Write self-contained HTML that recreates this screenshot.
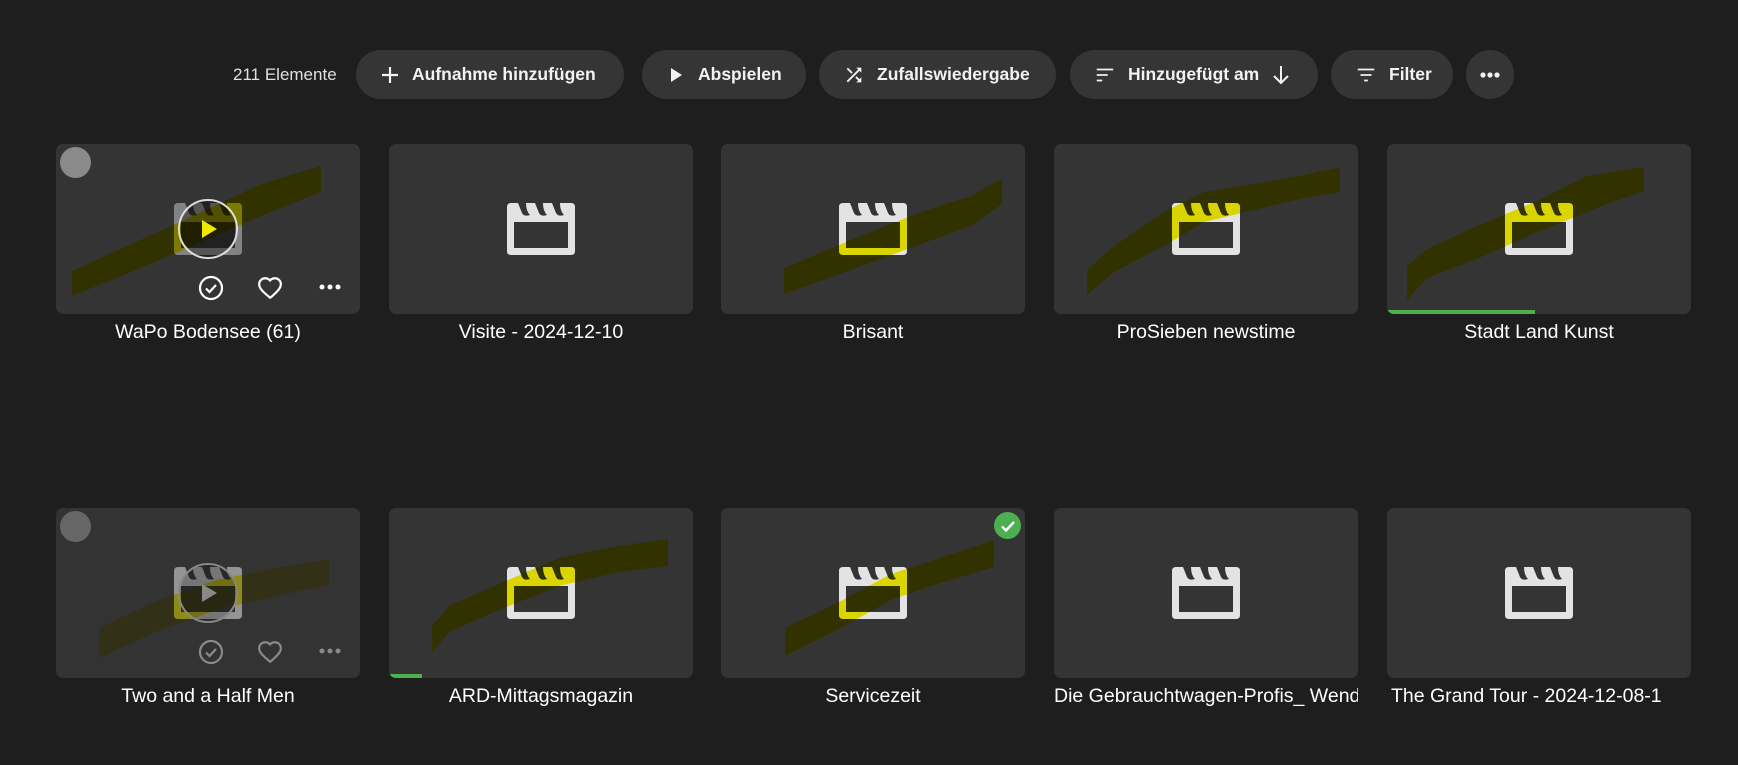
<!DOCTYPE html>
<html><head><meta charset="utf-8"><style>
*{box-sizing:border-box;margin:0;padding:0}
body{width:1738px;height:765px;background:#1e1e1e;font-family:"Liberation Sans",sans-serif;color:#fff;overflow:hidden;position:relative}
.count{position:absolute;left:233px;top:65px;font-size:17px;color:#e0e0e0}
.btn{position:absolute;top:50px;height:49px;border-radius:25px;background:#353535;display:flex;align-items:center;font-weight:bold;font-size:17.5px;color:#f2f2f2;padding-left:24px;gap:12px}
.btn svg{flex:none}
.card{position:absolute;width:304px;height:170px;background:#343434;border-radius:7px;overflow:hidden}
.card svg.ic{position:absolute;left:118px;top:59px}
.card svg.sc{position:absolute;left:0;top:0;mix-blend-mode:multiply}
.title{position:absolute;width:304px;text-align:center;font-size:19.5px;white-space:nowrap;overflow:hidden;color:#fff}
.prog{position:absolute;left:0;bottom:0;height:4px;background:#4caf50}
</style></head><body>
<svg width="0" height="0" style="position:absolute"><defs>
<g id="clap"><path fill-rule="evenodd" d="M4 0H64Q68 0 68 4V48Q68 52 64 52H4Q0 52 0 48V4Q0 0 4 0ZM7 19V45H61V19Z"/><path fill="#343434" d="M11 0 L19 0 Q19 8 23 12 Q17 14 15 10 Z M28 0 L36 0 Q36 8 40 12 Q34 14 32 10 Z M45 0 L53 0 Q53 8 57 12 Q51 14 49 10 Z"/></g>
</defs></svg>

<div class="count">211 Elemente</div>
<div class="btn" style="left:356px;width:268px"><svg width="20" height="20" viewBox="0 0 20 20"><path d="M10 2V18M2 10H18" stroke="#f2f2f2" stroke-width="2.2"/></svg>Aufnahme hinzufügen</div>
<div class="btn" style="left:642px;width:164px"><svg width="20" height="20" viewBox="0 0 20 20"><path d="M5 3L16 10L5 17Z" fill="#f2f2f2"/></svg>Abspielen</div>
<div class="btn" style="left:819px;width:237px"><svg width="22" height="22" viewBox="0 0 24 24"><path fill="#f2f2f2" d="M10.59 9.17L5.41 4 4 5.41l5.17 5.17 1.42-1.41zM14.5 4l2.04 2.04L4 18.59 5.41 20 17.960 7.46 20 9.5V4h-5.5zm.33 9.41l-1.41 1.41 3.13 3.13L14.5 20H20v-5.5l-2.04 2.04-3.13-3.13z"/></svg>Zufallswiedergabe</div>
<div class="btn" style="left:1070px;width:248px"><svg width="22" height="22" viewBox="0 0 24 24"><path d="M3 6H21M3 12H15M3 18H9" stroke="#f2f2f2" stroke-width="2"/></svg>Hinzugefügt am<svg width="20" height="22" viewBox="0 0 20 22"><path d="M10 2V19M3 12L10 19L17 12" stroke="#f2f2f2" stroke-width="2" fill="none"/></svg></div>
<div class="btn" style="left:1331px;width:122px"><svg width="22" height="22" viewBox="0 0 24 24"><path d="M3 6H21M6 12H18M10 18H14" stroke="#f2f2f2" stroke-width="2"/></svg>Filter</div>
<div class="btn" style="left:1466px;width:48px;padding-left:13px"><svg width="22" height="8" viewBox="0 0 22 8"><circle cx="4" cy="4" r="2.6" fill="#f2f2f2"/><circle cx="11" cy="4" r="2.6" fill="#f2f2f2"/><circle cx="18" cy="4" r="2.6" fill="#f2f2f2"/></svg></div>

<!-- Row 1 -->
<div class="card" style="left:56px;top:144px">
 <svg class="ic" width="68" height="52" fill="#8c8c8c" style="opacity:.9"><use href="#clap"/></svg>
 <svg class="sc" width="304" height="170"><path fill="#f5ee00" d="M16 127L80 98L150 66L205 40L265 22L265 48L205 72L150 96L80 126L16 152Z"/></svg>
 <div style="position:absolute;left:4px;top:3px;width:31px;height:31px;border-radius:50%;background:#8a8a8a"></div>
 <div style="position:absolute;left:122px;top:55px;width:60px;height:60px;border-radius:50%;border:2px solid #ddd;background:rgba(0,0,0,.35)"></div>
 <svg style="position:absolute;left:142px;top:74px" width="22" height="22"><path d="M4 2L19 11L4 20Z" fill="#f0e800"/></svg>
 <svg style="position:absolute;left:142px;top:131px" width="26" height="26" viewBox="0 0 26 26"><circle cx="13" cy="13" r="11" stroke="#fff" stroke-width="2.2" fill="none"/><path d="M8 13.5L11.5 17L18 10" stroke="#fff" stroke-width="2.2" fill="none"/></svg>
 <svg style="position:absolute;left:201px;top:131px" width="26" height="26" viewBox="0 0 24 24"><path d="M12 21l-1.45-1.32C5.4 15.36 2 12.28 2 8.5 2 5.42 4.420 3 7.5 3c1.74 0 3.41.81 4.5 2.09C13.09 3.81 14.76 3 16.5 3 19.58 3 22 5.42 22 8.5c0 3.78-3.4 6.86-8.55 11.54L12 21z" stroke="#fff" stroke-width="2" fill="none"/></svg>
 <svg style="position:absolute;left:262px;top:139px" width="24" height="8"><circle cx="4" cy="4" r="2.5" fill="#fff"/><circle cx="12" cy="4" r="2.5" fill="#fff"/><circle cx="20" cy="4" r="2.5" fill="#fff"/></svg>
</div>
<div class="title" style="left:56px;top:321px">WaPo Bodensee (61)</div>

<div class="card" style="left:389px;top:144px"><svg class="ic" width="68" height="52" fill="#e3e3e3"><use href="#clap"/></svg></div>
<div class="title" style="left:389px;top:321px">Visite - 2024-12-10</div>

<div class="card" style="left:721px;top:144px"><svg class="ic" width="68" height="52" fill="#e3e3e3"><use href="#clap"/></svg>
 <svg class="sc" width="304" height="170"><path fill="#f5ee00" d="M63 124L130 96L200 68L250 52L281 34L281 60L250 82L200 100L130 126L63 150Z"/></svg></div>
<div class="title" style="left:721px;top:321px">Brisant</div>

<div class="card" style="left:1054px;top:144px"><svg class="ic" width="68" height="52" fill="#e3e3e3"><use href="#clap"/></svg>
 <svg class="sc" width="304" height="170"><path fill="#f5ee00" d="M33 126L60 102L110 68L150 48L200 40L250 31L286 23L286 48L250 54L200 66L150 78L110 102L60 128L33 151Z"/></svg></div>
<div class="title" style="left:1054px;top:321px">ProSieben newstime</div>

<div class="card" style="left:1387px;top:144px"><svg class="ic" width="68" height="52" fill="#e3e3e3"><use href="#clap"/></svg>
 <svg class="sc" width="304" height="170"><path fill="#f5ee00" d="M20 122L40 105L90 82L150 57L200 32L257 23L257 47L220 60L150 88L90 115L40 134L20 156Z"/></svg>
 <div class="prog" style="width:148px"></div></div>
<div class="title" style="left:1387px;top:321px">Stadt Land Kunst</div>

<!-- Row 2 -->
<div class="card" style="left:56px;top:508px">
 <svg class="ic" width="68" height="52" fill="#e3e3e3"><use href="#clap"/></svg>
 <svg class="sc" width="304" height="170"><path fill="#f5ee00" d="M43 120L100 93L160 72L220 60L273 51L273 77L220 88L160 102L100 124L43 150Z"/></svg>
 <div style="position:absolute;inset:0;background:rgba(52,52,52,.45)"></div>
 <div style="position:absolute;left:4px;top:3px;width:31px;height:31px;border-radius:50%;background:#666"></div>
 <div style="position:absolute;left:122px;top:55px;width:60px;height:60px;border-radius:50%;border:2px solid #888;background:rgba(0,0,0,.2)"></div>
 <svg style="position:absolute;left:142px;top:74px" width="22" height="22"><path d="M4 2L19 11L4 20Z" fill="#888"/></svg>
 <svg style="position:absolute;left:142px;top:131px" width="26" height="26" viewBox="0 0 26 26"><circle cx="13" cy="13" r="11" stroke="#8a8a8a" stroke-width="2.2" fill="none"/><path d="M8 13.5L11.5 17L18 10" stroke="#8a8a8a" stroke-width="2.2" fill="none"/></svg>
 <svg style="position:absolute;left:201px;top:131px" width="26" height="26" viewBox="0 0 24 24"><path d="M12 21l-1.45-1.32C5.4 15.36 2 12.28 2 8.5 2 5.42 4.42 3 7.5 3c1.74 0 3.41.81 4.5 2.09C13.09 3.81 14.76 3 16.5 3 19.58 3 22 5.42 22 8.5c0 3.78-3.4 6.86-8.55 11.54L12 21z" stroke="#8a8a8a" stroke-width="2" fill="none"/></svg>
 <svg style="position:absolute;left:262px;top:139px" width="24" height="8"><circle cx="4" cy="4" r="2.5" fill="#8a8a8a"/><circle cx="12" cy="4" r="2.5" fill="#8a8a8a"/><circle cx="20" cy="4" r="2.5" fill="#8a8a8a"/></svg>
</div>
<div class="title" style="left:56px;top:685px">Two and a Half Men</div>

<div class="card" style="left:389px;top:508px"><svg class="ic" width="68" height="52" fill="#e3e3e3"><use href="#clap"/></svg>
 <svg class="sc" width="304" height="170"><path fill="#f5ee00" d="M43 118L60 98L110 76L170 50L230 38L279 31L279 58L230 64L170 78L110 102L60 124L43 145Z"/></svg>
 <div class="prog" style="width:33px"></div></div>
<div class="title" style="left:389px;top:685px">ARD-Mittagsmagazin</div>

<div class="card" style="left:721px;top:508px"><svg class="ic" width="68" height="52" fill="#e3e3e3"><use href="#clap"/></svg>
 <svg class="sc" width="304" height="170"><path fill="#f5ee00" d="M64 120L120 93L170 66L210 53L273 32L273 59L210 78L170 92L120 120L64 148Z"/></svg>
 <div style="position:absolute;left:273px;top:4px;width:27px;height:27px;border-radius:50%;background:#4caf50"></div>
 <svg style="position:absolute;left:279px;top:10px" width="16" height="16"><path d="M2 8.5L6 12.5L14 4" stroke="#fff" stroke-width="2.4" fill="none"/></svg></div>
<div class="title" style="left:721px;top:685px">Servicezeit</div>

<div class="card" style="left:1054px;top:508px"><svg class="ic" width="68" height="52" fill="#e3e3e3"><use href="#clap"/></svg></div>
<div class="title" style="left:1054px;top:685px;text-align:left">Die Gebrauchtwagen-Profis_ Wendepunkt</div>

<div class="card" style="left:1387px;top:508px"><svg class="ic" width="68" height="52" fill="#e3e3e3"><use href="#clap"/></svg></div>
<div class="title" style="left:1387px;top:685px;text-align:left;padding-left:4px">The Grand Tour - 2024-12-08-1</div>
</body></html>
